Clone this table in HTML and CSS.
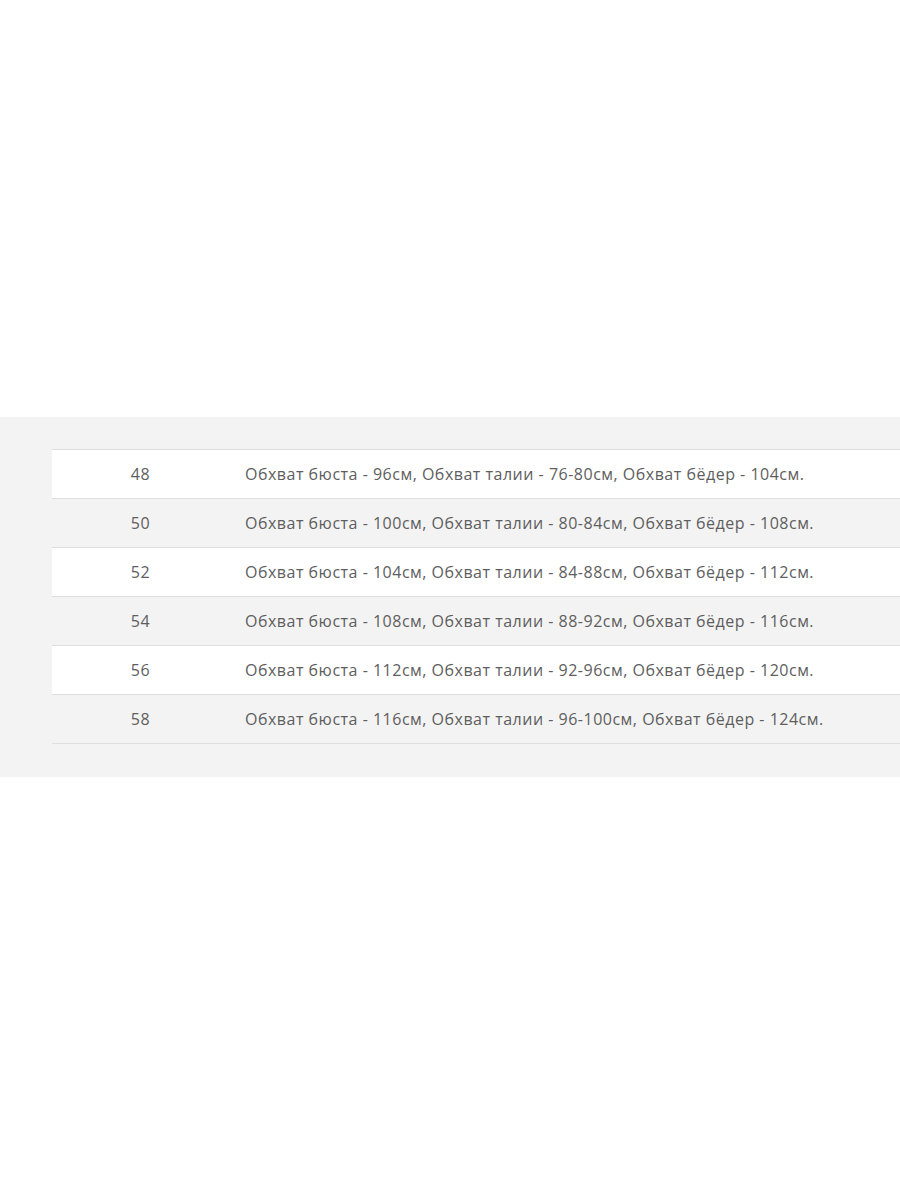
FILE: index.html
```html
<!DOCTYPE html>
<html lang="ru">
<head>
<meta charset="utf-8">
<link rel="stylesheet" href="styles.css">
</head>
<body>
<section class="panel">
  <table class="sizes">
    <tbody>
      <tr><td class="size">48</td><td class="desc">Обхват бюста - 96см, Обхват талии - 76-80см, Обхват бёдер - 104см.</td></tr>
      <tr><td class="size">50</td><td class="desc">Обхват бюста - 100см, Обхват талии - 80-84см, Обхват бёдер - 108см.</td></tr>
      <tr><td class="size">52</td><td class="desc">Обхват бюста - 104см, Обхват талии - 84-88см, Обхват бёдер - 112см.</td></tr>
      <tr><td class="size">54</td><td class="desc">Обхват бюста - 108см, Обхват талии - 88-92см, Обхват бёдер - 116см.</td></tr>
      <tr><td class="size">56</td><td class="desc">Обхват бюста - 112см, Обхват талии - 92-96см, Обхват бёдер - 120см.</td></tr>
      <tr><td class="size">58</td><td class="desc">Обхват бюста - 116см, Обхват талии - 96-100см, Обхват бёдер - 124см.</td></tr>
    </tbody>
  </table>
</section>
</body>
</html>
```

FILE: styles.css
```css
html, body {
  margin: 0;
  padding: 0;
  background: #ffffff;
}
body {
  font-family: "Open Sans", "Liberation Sans", sans-serif;
}
.panel {
  margin-top: 417px;
  background: #f3f3f3;
  padding: 32px 0 33px 52px;
  overflow: hidden;
}
.sizes {
  border-collapse: collapse;
  width: 900px;
  border-top: 1px solid #dedede;
}
.sizes tr {
  height: 49px;
  border-bottom: 1px solid #dedede;
}
.sizes tr:nth-child(odd) {
  background: #ffffff;
}
.sizes tr:nth-child(even) {
  background: #f3f3f3;
}
.sizes td {
  padding: 0;
  font-size: 16px;
  color: #5e5e5e;
  vertical-align: middle;
  letter-spacing: 0.5px;
}
.size {
  width: 177px;
  text-align: center;
}
.desc {
  padding-left: 16px !important;
  text-align: left;
  white-space: nowrap;
}
```
